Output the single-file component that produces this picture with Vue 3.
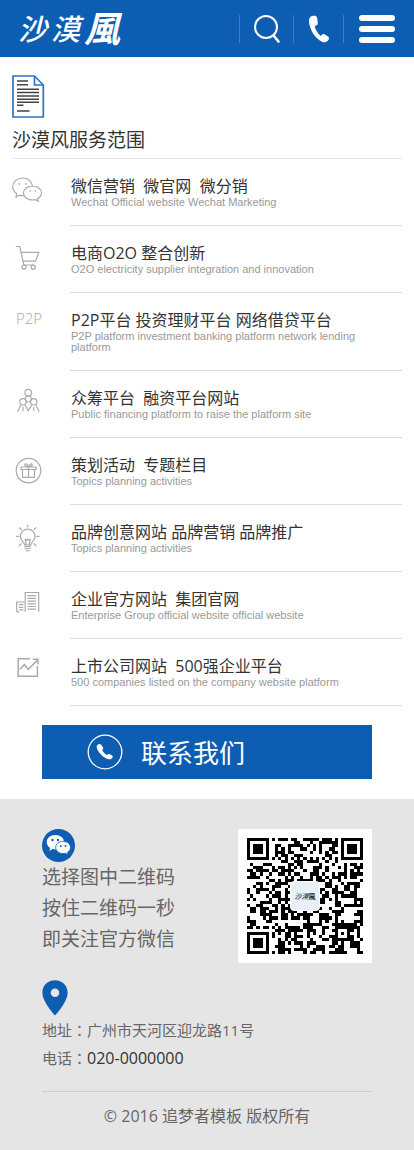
<script setup>
const services = [
  { icon: 'wechat', title: '微信营销  微官网  微分销', desc: 'Wechat Official website Wechat Marketing' },
  { icon: 'cart', title: '电商O2O 整合创新', desc: 'O2O electricity supplier integration and innovation' },
  { icon: 'p2p', title: 'P2P平台 投资理财平台 网络借贷平台', desc: 'P2P platform investment banking platform network lending platform' },
  { icon: 'crowd', title: '众筹平台  融资平台网站', desc: 'Public financing platform to raise the platform site' },
  { icon: 'gift', title: '策划活动  专题栏目', desc: 'Topics planning activities' },
  { icon: 'bulb', title: '品牌创意网站 品牌营销 品牌推广', desc: 'Topics planning activities' },
  { icon: 'building', title: '企业官方网站  集团官网', desc: 'Enterprise Group official website official website' },
  { icon: 'chart', title: '上市公司网站  500强企业平台', desc: '500 companies listed on the company website platform' },
];

const tips = ['选择图中二维码', '按住二维码一秒', '即关注官方微信'];

// 37 x 37 modules
const size = 37;

// square rings around a centre: finder (r = 3) and alignment (r = 2) marks
const ring = (x, y, cx, cy) => Math.max(Math.abs(x - cx), Math.abs(y - cy));

const isDark = (x, y) => {
  for (const [cx, cy] of [[3, 3], [33, 3], [3, 33]]) {
    const d = ring(x, y, cx, cy);
    if (d <= 4) return d !== 2 && d !== 4;
  }
  const a = ring(x, y, 30, 30);
  if (a <= 2) return a !== 1;
  if (x === 6 || y === 6) return (x + y) % 2 === 0;
  let n = (x * 374761 + y * 668265 + 1013) | 0;
  n = Math.imul(n ^ (n >>> 13), 1274126177);
  return (((n ^ (n >>> 16)) >>> 3) & 1) === 1;
};

let qrPath = '';
for (let y = 0; y < size; y++) {
  for (let x = 0; x < size; x++) {
    if (isDark(x, y)) qrPath += `M${x} ${y}h1v1h-1z`;
  }
}
</script>

<template>
  <div class="page">
    <header class="header">
      <a class="logo" href="#" aria-label="沙漠風"><span class="sha">沙</span><span class="mo">漠</span><span class="feng">風</span></a>
      <nav class="tools">
        <button class="tool search" type="button" aria-label="搜索">
          <svg width="28" height="30" viewBox="0 0 28 30" fill="none" stroke="#fff">
            <circle cx="13" cy="13" r="11" stroke-width="2" />
            <path d="M20.500 21.500l5 6" stroke-width="2.600" stroke-linecap="round" />
          </svg>
        </button>
        <a class="tool" href="tel:020-0000000" aria-label="电话">
          <svg width="22" height="28" viewBox="0 0 22 28" fill="#fff">
            <path d="M5.200.7C2.300 1 .8 3.300 1 6.500 1.500 14.500 7 23.500 14 26.800c2.500 1.200 5.300.3 6.700-2.300.6-1.200.3-2.300-.8-3l-3-2c-1.200-.7-2.300-.5-3.200.4l-1 1C9.500 18.300 7.300 14.600 6.700 11l1.600-.6c1.200-.5 1.600-1.300 1.500-2.500L9.200 3C8.800 1 7.200.5 5.200.7z" />
          </svg>
        </a>
        <button class="tool menu" type="button" aria-label="菜单">
          <span></span>
          <span></span>
          <span></span>
        </button>
      </nav>
    </header>

    <main class="services">
      <svg class="doc" width="33" height="43" viewBox="0 0 33 43" fill="none">
        <path d="M1 1h21.500L31.300 10v32H1z" stroke="#2a75c8" stroke-width="1.700" />
        <path d="M22.500 1v9h8.800" stroke="#2a75c8" stroke-width="1.700" />
        <path d="M5 6h11M5 9.700h11M5 14.300h22M5 17.600h22M5 20.900h22M5 24.200h22M5 27.300h22M5 30.200h6.500M5 36h12.500" stroke="#444" stroke-width="1.500" />
      </svg>
      <h1>沙漠风服务范围</h1>

      <ul class="list">
        <li v-for="item in services" :key="item.icon" class="item">
          <span v-if="item.icon === 'p2p'" class="icon-text">P2P</span>
          <svg v-else class="icon" width="34" height="40" viewBox="0 0 34 40">
            <g v-if="item.icon === 'wechat'">
              <path d="M20.600 15C19.800 10.500 15.800 7 10.700 7 5 7 .7 11 .7 15.700c0 3 1.600 5.300 3.900 6.900L4 26l3.500-1.800c1.500.5 3 .6 4.300.4" />
              <path d="M20.500 15c-5.100 0-9 3.200-9 7s3.900 7 9 7c1 0 2-.1 2.900-.4l2.800 1.700-.6-2.700c2.400-1.300 3.900-3.300 3.900-5.600 0-3.800-4-7-9-7z" />
              <path d="M6.500 13h1.600M13.200 13h1.600M17.300 20h1.400M22.600 20h1.400" stroke-width="1.600" />
            </g>
            <g v-else-if="item.icon === 'cart'">
              <path d="M3.700 8.500h4.100l4 18.500M9.300 14.300h17.500l-3.300 8.900H11.200M11.800 27h10" />
              <circle cx="12" cy="29.200" r="2" />
              <circle cx="21.300" cy="29.200" r="2" />
            </g>
            <g v-else-if="item.icon === 'crowd'">
              <circle cx="16.300" cy="9.700" r="3.300" />
              <circle cx="16.300" cy="16" r="3" />
              <circle cx="11" cy="18.800" r="3.200" />
              <circle cx="21.700" cy="18.800" r="3.200" />
              <path d="M9 21.700l-3.500 7M13 21.700l3.300 6 3.400-6M23.700 21.700l3.500 7M11 24v4M21.700 24v4" />
            </g>
            <g v-else-if="item.icon === 'gift'">
              <circle cx="16.500" cy="20.600" r="12.300" />
              <path d="M9 17h15v2.500H9zM10.500 19.500v7.800h12v-7.800M16.500 17v10.300M16.500 16.800c-1-3-3.500-3.600-3.700-2.300-.2 1.200 1.500 2 3.700 2.300 2.200-.3 3.900-1.100 3.700-2.300-.2-1.300-2.700-.7-3.700 2.300z" />
            </g>
            <g v-else-if="item.icon === 'bulb'">
              <path d="M12.600 28c0-2.800-4.200-4-4.200-8.500a7.300 7.300 0 0 1 14.600 0c0 4.500-4.200 5.700-4.200 8.500zM13 22l1.300 5.500M18.400 22l-1.300 5.500M13 22l1.400 1.200 1.300-1.200 1.300 1.200 1.400-1.200" />
              <path d="M12.300 29.800l6.800-.8M12.600 32l6.200-.8M13.800 34l4-.5" />
              <path d="M15.700 7.500v3M7.300 10.500l2.400 2.500M4 19.300h3.300M7 29l2.600-2.600M24.100 10.500L21.700 13M27.500 19.300h-3.300M24.400 29l-2.600-2.600" />
            </g>
            <g v-else-if="item.icon === 'building'">
              <path d="M13.200 27.800V8.500h13.500v19.300M4.700 27.800V18h8.500" />
              <path d="M15.500 11.700H24M15.500 14.400H24M15.500 17.100H24M15.500 19.800H24M15.500 22.500H24M15.500 25.200H24M7 20.700h4.300M7 23.300h4.300M7 25.900h4.300M4.700 27.800h2.500" />
            </g>
            <g v-else>
              <path d="M18 7.800H6.200v17.500h19.200V15M8 18.300l4.300-4.600 4 4.600L25.600 9M20.700 8.300h5.200v5.200" stroke-width="1.500" />
            </g>
          </svg>
          <div class="text">
            <h2>{{ item.title }}</h2>
            <p>{{ item.desc }}</p>
          </div>
        </li>
      </ul>

      <a class="contact" href="tel:020-0000000">
        <svg width="36" height="36" viewBox="0 0 36 36">
          <circle cx="18" cy="18" r="16.800" fill="none" stroke="#fff" stroke-width="1.300" />
          <path d="M11.700 10.200c-2.200.6-2.500 2.600-1.400 5 2 4.500 6.500 8.700 11.300 10 1.800.4 3.400-.2 4-1.900.3-.9 0-1.600-.8-2.100l-2.100-1c-.8-.4-1.500-.3-2.100.2l-.8.6c-2-1.200-3.700-2.900-4.600-4.700l.7-.8c.5-.6.5-1.200.1-1.900l-1.600-2.600c-.7-1-1.600-1.100-2.700-.8z" fill="#fff" />
        </svg>
        <span>联系我们</span>
      </a>
    </main>

    <footer class="footer">
      <div class="follow">
        <div class="tips">
          <svg width="33" height="33" viewBox="0 0 33 33">
            <circle cx="16.500" cy="16.500" r="16.500" fill="#0d5db3" />
            <path d="M13.300 6C8.300 6 4.700 9.200 4.700 13.100c0 2.500 1.300 4.500 3.300 5.800l-.6 3 3.200-1.800c1 .3 1.800.4 2.900.4 5 0 8.600-3.400 8.600-7.400S18.300 6 13.300 6z" fill="#fff" />
            <path d="M21 12.300c-4.200 0-7.300 2.800-7.300 6.100s3.100 6.200 7.300 6.200c.9 0 1.700-.1 2.400-.4l2.700 1.600-.6-2.500c1.900-1.200 3-2.900 3-4.900 0-3.300-3.300-6.100-7.500-6.100z" fill="#fff" stroke="#0d5db3" stroke-width=".8" />
            <g fill="#0d5db3">
              <circle cx="10.500" cy="11" r="1.200" />
              <circle cx="16" cy="11" r="1.200" />
              <circle cx="18.800" cy="17" r="1" />
              <circle cx="23.500" cy="17" r="1" />
            </g>
          </svg>
          <p v-for="tip in tips" :key="tip">{{ tip }}</p>
        </div>
        <div class="qr">
          <svg width="116" height="116" viewBox="0 0 37 37" shape-rendering="crispEdges">
            <path :d="qrPath" />
          </svg>
          <span class="qr-logo"><i>沙漠</i><b>風</b></span>
        </div>
      </div>

      <address class="address">
        <svg width="26" height="36" viewBox="0 0 26 36">
          <path d="M13 .3C5.800.3.400 5.500.400 12.500c0 3 .8 5.500 2.200 8.200C5 25.600 8.700 30.700 13 35.500c4.300-4.800 8-9.900 10.400-14.800 1.400-2.700 2.200-5.200 2.200-8.200C25.600 5.500 20.200.3 13 .3zm0 8.200a4.300 4.300 0 1 1 0 8.600 4.300 4.300 0 0 1 0-8.600z" fill="#0d5db3" />
        </svg>
        <p>地址<span class="colon">：</span>广州市天河区迎龙路11号</p>
        <p>电话<span class="colon">：</span><a href="tel:020-0000000">020-0000000</a></p>
      </address>

      <p class="copyright">© 2016 追梦者模板 版权所有</p>
    </footer>
  </div>
</template>

<style>
body {
  margin: 0;
  background: #fff;
}
</style>

<style scoped>
.page {
  font-family: "Open Sans", "Noto Sans CJK SC", sans-serif;
  color: #333;
}
h1, h2, p, ul {
  margin: 0;
  padding: 0;
  font-weight: 400;
}
svg {
  display: block;
}
a {
  color: inherit;
  text-decoration: none;
}

.header {
  display: flex;
  align-items: center;
  justify-content: space-between;
  height: 57px;
  padding: 0 5px 0 18px;
  background: #0d5db3;
}
.logo {
  display: flex;
  align-items: center;
  gap: 4px;
  color: #fff;
  font-style: italic;
  font-weight: 500;
  line-height: 40px;
}
.sha,
.mo {
  font-size: 29px;
}
.feng {
  font-size: 36px;
  font-weight: 700;
}
.tools {
  display: flex;
  height: 28px;
}
.tool {
  display: flex;
  align-items: center;
  justify-content: center;
  box-sizing: border-box;
  width: 50px;
  padding: 0;
  border: 0;
  border-left: 1px solid #3d7dc3;
  background: none;
  cursor: pointer;
}
.search {
  width: 54px;
}
.menu {
  flex-direction: column;
  gap: 5px;
  width: 66px;
}
.menu span {
  width: 36px;
  height: 6px;
  border-radius: 3px;
  background: #fff;
}

.services {
  padding: 18px 12px 20px;
}
h1 {
  padding: 8px 0 3px;
  border-bottom: 1px solid #e5e5e5;
  font-size: 19px;
  line-height: 29px;
}
.list {
  list-style: none;
}
.item {
  display: flex;
}
.icon {
  flex: none;
  margin: 12px 24px 0 0;
  fill: none;
  stroke: #aaa;
  stroke-width: 1.2;
}
.icon-text {
  flex: none;
  box-sizing: border-box;
  width: 58px;
  padding: 14px 0 0 4px;
  color: #aaa;
  font-size: 15px;
  font-weight: 300;
  line-height: 22px;
}
.text {
  flex: 1;
  padding: 17px 0 17px 1px;
  border-bottom: 1px solid #ddd;
}
h2 {
  font-size: 16px;
  line-height: 21px;
  white-space: pre-wrap;
}
.text p {
  padding-right: 24px;
  color: #999;
  font-family: "Liberation Sans", Arial, sans-serif;
  font-size: 11px;
  line-height: 11px;
}
.contact {
  display: flex;
  align-items: center;
  gap: 18px;
  height: 54px;
  margin: 19px 30px 0;
  padding-left: 45px;
  background: #0d5db3;
  color: #fff;
  font-size: 26px;
}

.footer {
  padding: 30px 42px 23px;
  background: #e5e5e5;
  color: #666;
}
.follow {
  display: flex;
  justify-content: space-between;
  align-items: flex-start;
}
.tips p {
  font-size: 19px;
  line-height: 31px;
}
.qr {
  position: relative;
  padding: 9px;
  background: #fff;
}
.qr-logo {
  position: absolute;
  inset: 52px;
  display: flex;
  align-items: center;
  justify-content: center;
  border: 1px solid #fff;
  border-radius: 4px;
  background: #e9eff6;
  color: #222;
  font-size: 7px;
}
.address {
  margin-top: 17px;
  font-style: normal;
}
.address p {
  font-size: 15px;
  line-height: 28px;
}
.address a {
  color: #333;
  font-size: 16px;
}
.colon {
  font-family: "Noto Sans CJK TC", sans-serif;
}
.copyright {
  margin-top: 19px;
  padding-top: 12px;
  border-top: 1px solid #ccc;
  font-size: 16px;
  line-height: 24px;
  text-align: center;
}
</style>
